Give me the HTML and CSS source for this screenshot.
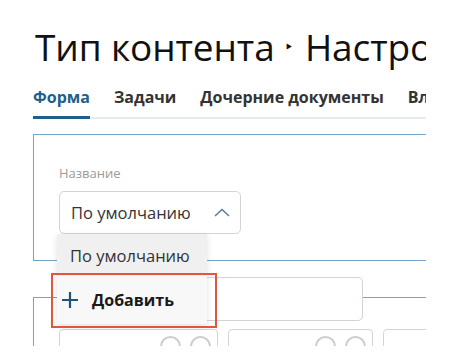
FILE: index.html
```html
<!DOCTYPE html>
<html>
<head>
  <meta charset="utf-8">
  <link rel="stylesheet" href="styles.css">
</head>
<body>
  <div class="page">
    <h1 class="title">Тип контента <span class="sep">&#8227;</span> Настройки формы</h1>

    <nav class="tabs">
      <a class="tab active">Форма</a>
      <a class="tab">Задачи</a>
      <a class="tab">Дочерние документы</a>
      <a class="tab">Вложения</a>
    </nav>

    <section class="card">
      <div class="label">Название</div>
      <div class="select-wrap">
        <div class="select">
          <span>По умолчанию</span>
          <svg class="chevron" width="16" height="9" viewBox="0 0 16 9">
            <path d="M1 8 L8 1.5 L15 8" fill="none" stroke="#5b7f9c" stroke-width="1.6"/>
          </svg>
        </div>
        <ul class="dropdown">
          <li class="option">По умолчанию</li>
          <li class="option add">
            <svg width="18" height="18" viewBox="0 0 18 18">
              <path d="M9 1 V17 M1 9 H17" stroke="#1f5478" stroke-width="2.2"/>
            </svg>
            Добавить
          </li>
        </ul>
        <div class="highlight"></div>
      </div>
    </section>

    <section class="card card-fields">
      <div class="head-input"></div>
      <div class="row">
        <div class="field"><span class="circle"></span><span class="circle"></span></div>
        <div class="field"><span class="circle"></span><span class="circle"></span></div>
        <div class="field"></div>
      </div>
    </section>
  </div>
</body>
</html>
```

FILE: styles.css
```css
body {
  margin: 0;
  background: #fff;
  font-family: 'Open Sans', 'Noto Sans', sans-serif;
  color: #222;
}

.page {
  width: 426px;
  height: 346px;
  overflow: hidden;
  padding-left: 33px;
  box-sizing: border-box;
}

.title {
  margin: 22px 0 0 2px;
  font-size: 37px;
  font-weight: 400;
  color: #111;
  white-space: nowrap;
  line-height: 50px;
  letter-spacing: -0.1px;
}

.sep {
  font-size: 20px;
  vertical-align: 7px;
  margin: 0 3px 0 1px;
}

.tabs {
  display: flex;
  gap: 24px;
  margin-top: 14px;
  border-bottom: 2px solid #e6ebef;
  white-space: nowrap;
}

.tab {
  font-size: 16px;
  font-weight: 700;
  color: #333;
  padding-bottom: 8px;
  margin-bottom: -2px;
  border-bottom: 3px solid transparent;
}

.tab.active {
  color: #1f5f8b;
  border-bottom-color: #1f5f8b;
}

.card {
  border: 1.5px solid #6ea7c9;
  border-right: none;
  margin-top: 15px;
  padding: 29px 0 26px 25px;
}

.label {
  font-size: 13px;
  color: #9a9a9a;
  margin-bottom: 9px;
}

.select-wrap {
  position: relative;
  width: 182px;
}

.select {
  height: 43px;
  box-sizing: border-box;
  border: 1px solid #d4d4d4;
  border-radius: 5px;
  display: flex;
  align-items: center;
  justify-content: space-between;
  padding: 0 10px 0 11px;
  font-size: 16.5px;
  color: #333;
}

.dropdown {
  position: absolute;
  top: 43px;
  left: -2px;
  width: 150px;
  margin: 0;
  padding: 0;
  list-style: none;
  background: #f0f0f0;
  box-shadow: 0 2px 6px rgba(0, 0, 0, 0.12);
  z-index: 2;
}

.option {
  height: 42px;
  display: flex;
  align-items: center;
  padding-left: 13px;
  font-size: 16.5px;
  color: #333;
}

.option.add {
  height: 48px;
  background: #f8f8f8;
  padding-left: 4px;
  gap: 13px;
  font-weight: 700;
  font-size: 16px;
  color: #1a1a1a;
}

.highlight {
  position: absolute;
  top: 82px;
  left: -8px;
  width: 162px;
  height: 51px;
  border: 2px solid #e0573f;
  z-index: 3;
}

.card-fields {
  margin-top: 36px;
  padding: 0 0 0 25px;
}

.head-input {
  width: 304px;
  height: 44px;
  box-sizing: border-box;
  margin-top: -21px;
  border: 1px solid #d4d4d4;
  border-radius: 5px;
  background: #fff;
}

.row {
  display: flex;
  gap: 10px;
  margin-top: 8px;
}

.field {
  flex: none;
  width: 159px;
  height: 40px;
  box-sizing: border-box;
  border: 1px solid #d4d4d4;
  border-radius: 4px;
  display: flex;
  justify-content: flex-end;
  gap: 9px;
  padding: 6px 6px 0 0;
}

.field + .field {
  width: 145px;
}

.circle {
  width: 21px;
  height: 21px;
  box-sizing: border-box;
  border: 2px solid #ccc;
  border-radius: 50%;
}
```
